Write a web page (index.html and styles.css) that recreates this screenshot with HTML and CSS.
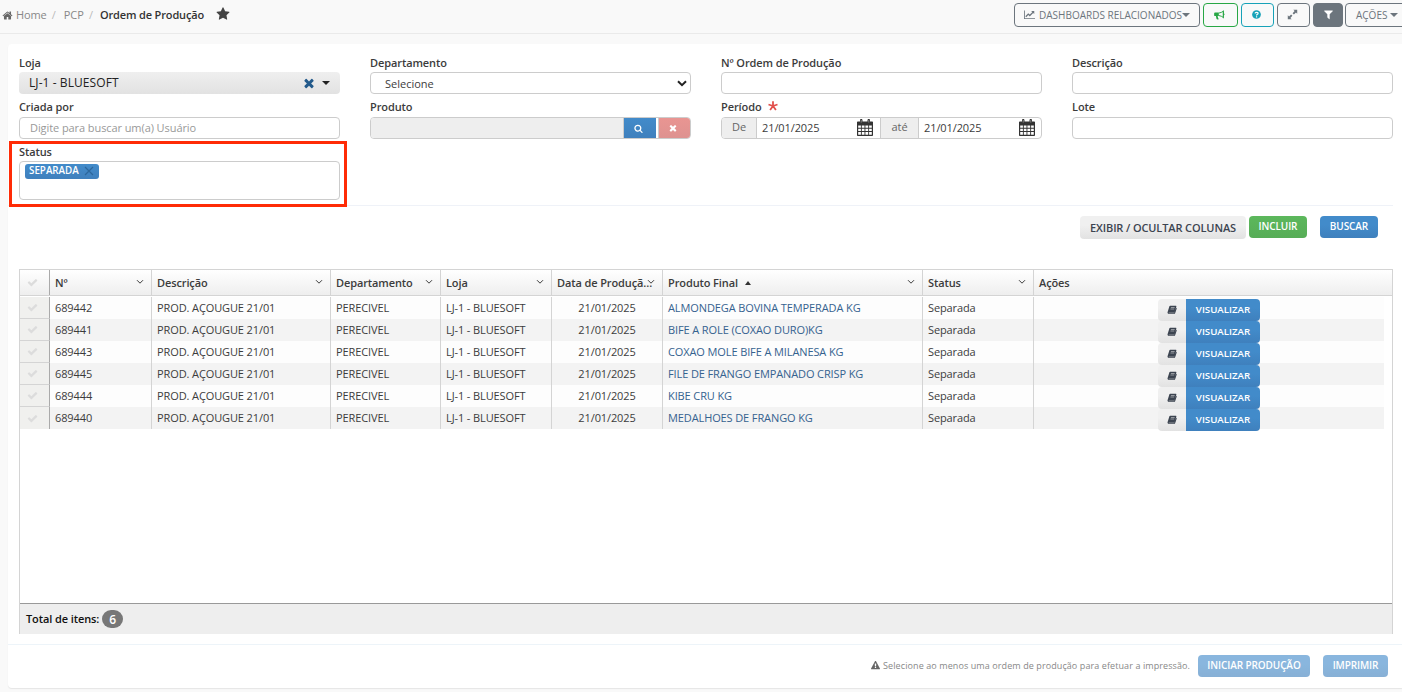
FILE: index.html
```html
<!DOCTYPE html>
<html lang="pt-BR">
<head>
    <meta charset="UTF-8">
    <meta name="viewport" content="width=device-width, initial-scale=1.0">
    <title>Ordem de Produção</title>
    <link rel="stylesheet" href="styles.css">
</head>
<body>

    <svg class="sprite">
        <symbol id="i-home" viewBox="0 0 1792 1792"><path d="M1472 992v480q0 26-19 45t-45 19h-384v-384h-256v384h-384q-26 0-45-19t-19-45v-480q0-1 .5-3t.5-3l575-474 575 474q1 2 1 6zm223-69l-62 74q-8 9-21 11h-3q-13 0-21-7l-692-577-692 577q-12 8-24 7-13-2-21-11l-62-74q-8-10-7-23.5t11-21.5l719-599q32-26 76-26t76 26l244 204v-195q0-14 9-23t23-9h192q14 0 23 9t9 23v408l219 182q10 8 11 21.5t-7 23.5z"/></symbol>
        <symbol id="i-star" viewBox="0 0 1792 1792"><path d="M1728 647q0 22-26 48l-363 354 86 500q1 7 1 20 0 21-10.5 35.5t-30.5 14.5q-19 0-40-12l-449-236-449 236q-22 12-40 12-21 0-31.5-14.5t-10.5-35.5q0-6 2-20l86-500-364-354q-25-27-25-48 0-37 56-46l502-73 225-455q19-41 49-41t49 41l225 455 502 73q56 9 56 46z"/></symbol>
        <symbol id="i-check" viewBox="0 0 1792 1792"><path d="M1671 566q0 40-28 68l-724 724-136 136q-28 28-68 28t-68-28l-136-136-362-362q-28-28-28-68t28-68l136-136q28-28 68-28t68 28l294 295 656-657q28-28 68-28t68 28l136 136q28 28 28 68z"/></symbol>
        <symbol id="i-times" viewBox="0 0 1792 1792"><path d="M1490 1322q0 40-28 68l-136 136q-28 28-68 28t-68-28l-294-294-294 294q-28 28-68 28t-68-28l-136-136q-28-28-28-68t28-68l294-294-294-294q-28-28-28-68t28-68l136-136q28-28 68-28t68 28l294 294 294-294q28-28 68-28t68 28l136 136q28 28 28 68t-28 68l-294 294 294 294q28 28 28 68z"/></symbol>
        <symbol id="i-search" viewBox="0 0 1792 1792"><path d="M1216 832q0-185-131.5-316.5t-316.5-131.5-316.5 131.5-131.5 316.5 131.5 316.5 316.5 131.5 316.5-131.5 131.5-316.5zm512 832q0 52-38 90t-90 38q-54 0-90-38l-343-342q-179 124-399 124-143 0-273.5-55.5t-225-150-150-225-55.5-273.5 55.5-273.5 150-225 225-150 273.5-55.5 273.5 55.5 225 150 150 225 55.5 273.5q0 220-124 399l343 343q37 37 37 90z"/></symbol>
        <symbol id="i-filter" viewBox="0 0 1792 1792"><path d="M1595 295q17 41-14 70l-493 493v742q0 42-39 59-13 5-25 5-27 0-45-19l-256-256q-19-19-19-45v-486l-493-493q-31-29-14-70 17-39 59-39h1280q42 0 59 39z"/></symbol>
        <symbol id="i-warning" viewBox="0 0 1792 1792"><path d="M1024 1375v-190q0-14-9.5-23.5t-22.5-9.5h-192q-13 0-22.5 9.5t-9.5 23.5v190q0 14 9.5 23.5t22.5 9.5h192q13 0 22.5-9.5t9.5-23.5zm-2-374l18-459q0-12-10-19-13-11-24-11h-220q-11 0-24 11-10 7-10 21l17 457q0 10 10 16.5t24 6.5h185q14 0 23.5-6.5t10.5-16.5zm-14-934l768 1408q35 63-2 126-17 29-46.5 46t-63.5 17h-1536q-34 0-63.5-17t-46.5-46q-37-63-2-126l768-1408q17-31 47-49t65-18 65 18 47 49z"/></symbol>
        <symbol id="i-chart" viewBox="0 0 16 14"><path d="M0 1h1.2v11.3H16v1.2H0z"/><path d="M2.6 10.2l3.6-3.8 2.2 2.1 5-5" fill="none" stroke="currentColor" stroke-width="1.9"/><path d="M10.4 1.800h4.500v4.500z"/></symbol>
        <symbol id="i-bullhorn" viewBox="0 0 16 14"><path d="M1.500 3.500H7v5H5.200l.9 3.300.9.9c-1.100 1.200-2.900 1-3.300.1L2.700 8.500H1.500C.7 8.500.2 8 .2 7.200V4.800C.2 4 .7 3.500 1.500 3.500z"/><path d="M7 4.200c2.500-.3 5-1.400 6.500-2.700v9C12 9.200 9.500 8.100 7 7.800" fill="none" stroke="currentColor" stroke-width="1.400"/><path d="M13 .5h1.300v4.200c1.400.3 1.400 2.500 0 2.800v4.200H13z"/></symbol>
        <symbol id="i-question" viewBox="0 0 14 14"><circle cx="7" cy="7" r="6.800"/><path d="M4.700 5.300C5 3.300 9.400 3 9.400 5.300c0 1.500-2.200 1.500-2.300 3.200M7.100 9.600v1.900" fill="none" stroke="#fff" stroke-width="1.900"/></symbol>
        <symbol id="i-expand" viewBox="0 0 14 14"><path d="M8 1h5v5l-1.600-1.600-2.600 2.700-1.700-1.700 2.600-2.700zM6 13H1V8l1.600 1.600 2.600-2.700 1.700 1.700-2.600 2.700z"/></symbol>
        <symbol id="i-book" viewBox="0 0 16 14"><path d="M5.600 1h8.200c1 0 1.400.7 1.100 1.600l-2.600 8.600c-.2.700-.8 1-1.400 1H3.300c-.7 0-.8.9.1.9h8.100L14.800 4c1 .3.900 1 .8 1.400L13 13c-.3.700-.8 1-1.500 1H3.200C1.300 14 .4 12.300 1 11L3.500 2.800C3.900 1.500 4.600 1 5.600 1zm.8 2.200L6.100 4.300h6l.3-1.100zM5.700 5.600l-.3 1.100h6l.3-1.100z" fill-rule="evenodd"/></symbol>
        <symbol id="i-calendar" viewBox="0 0 16 17"><path d="M1 2.500h2V1.300C3 .5 3.500 0 4.200 0s1.300.5 1.300 1.300v1.200h5V1.300c0-.8.500-1.300 1.300-1.300S13 .5 13 1.300v1.200h2c.6 0 1 .4 1 1V16c0 .6-.4 1-1 1H1c-.6 0-1-.4-1-1V3.500c0-.6.400-1 1-1z"/><path d="M1.200 6.500h2.700v2.300H1.200zm3.600 0h2.700v2.300H4.800zm3.600 0h2.800v2.300H8.400zm3.700 0h2.700v2.300h-2.700zM1.200 9.700h2.700V12H1.200zm3.600 0h2.700V12H4.800zm3.600 0h2.800V12H8.400zm3.700 0h2.700V12h-2.700zM1.200 12.900h2.700v2.800H1.200zm3.600 0h2.700v2.800H4.800zm3.600 0h2.800v2.800H8.400zm3.700 0h2.700v2.800h-2.700z" fill="#fff"/><path d="M4.200 1v2.600M11.800 1v2.600" stroke="#aaa" stroke-width=".7"/></symbol>
        <symbol id="i-down" viewBox="0 0 8 6"><path d="M1 1.200l3 3 3-3" fill="none" stroke="currentColor" stroke-width="1"/></symbol>
        <symbol id="i-select" viewBox="0 0 10 7"><path d="M1 1.200l4 4 4-4" fill="none" stroke="currentColor" stroke-width="2"/></symbol>
        <symbol id="i-x" viewBox="0 0 10 10"><path d="M1 1l8 8M9 1L1 9" fill="none" stroke="currentColor" stroke-width="1.200"/></symbol>
        <symbol id="i-required" viewBox="0 0 10 10"><path d="M5 5V.3M5 5l4.500-1.500M5 5l2.900 4M5 5L2.100 9M5 5L.5 3.500" fill="none" stroke="currentColor" stroke-width="1.800"/></symbol>
    </svg>

    <header class="topbar">
        <nav class="breadcrumb">
            <svg class="icon icon-home"><use href="#i-home"/></svg>
            <a class="crumb-home">Home</a><span class="sep">/</span>
            <a class="crumb-pcp">PCP</a><span class="sep sep-last">/</span>
            <b>Ordem de Produção</b>
            <svg class="icon icon-star"><use href="#i-star"/></svg>
        </nav>
        <div class="toolbar">
            <button class="tool tool-dash"><svg class="icon icon-chart"><use href="#i-chart"/></svg><span>DASHBOARDS RELACIONADOS</span><i class="caret"></i></button>
            <button class="tool tool-news"><svg class="icon icon-horn"><use href="#i-bullhorn"/></svg></button>
            <button class="tool tool-help"><svg class="icon icon-help"><use href="#i-question"/></svg></button>
            <button class="tool tool-expand"><svg class="icon icon-expand"><use href="#i-expand"/></svg></button>
            <button class="tool tool-filter"><svg class="icon icon-filter"><use href="#i-filter"/></svg></button>
            <button class="tool tool-actions"><span>AÇÕES</span><i class="caret"></i></button>
        </div>
    </header>

    <main class="panel">
        <section class="filters">
            <div class="field">
                <label>Loja</label>
                <div class="combo"><span class="combo-text">LJ-1 - BLUESOFT</span><span class="combo-clear"><svg class="icon"><use href="#i-times"/></svg></span><i class="caret"></i></div>
            </div>
            <div class="field">
                <label>Departamento</label>
                <div class="control select"><span>Selecione</span><svg class="icon"><use href="#i-select"/></svg></div>
            </div>
            <div class="field">
                <label>Nº Ordem de Produção</label>
                <div class="control"></div>
            </div>
            <div class="field">
                <label>Descrição</label>
                <div class="control"></div>
            </div>
            <div class="field second">
                <label>Criada por</label>
                <div class="control placeholder"><span>Digite para buscar um(a) Usuário</span></div>
            </div>
            <div class="field second">
                <label>Produto</label>
                <div class="control lookup">
                    <span class="lookup-value"></span>
                    <button class="lookup-search"><svg class="icon"><use href="#i-search"/></svg></button>
                    <button class="lookup-clear"><svg class="icon"><use href="#i-times"/></svg></button>
                </div>
            </div>
            <div class="field second">
                <label>Período <svg class="icon required"><use href="#i-required"/></svg></label>
                <div class="control period">
                    <span class="addon addon-from">De</span>
                    <span class="date date-from">21/01/2025<svg class="icon"><use href="#i-calendar"/></svg></span>
                    <span class="addon addon-to">até</span>
                    <span class="date">21/01/2025<svg class="icon"><use href="#i-calendar"/></svg></span>
                </div>
            </div>
            <div class="field second">
                <label>Lote</label>
                <div class="control"></div>
            </div>
            <div class="field field-status">
                <label>Status</label>
                <div class="control tags"><span class="tag">SEPARADA<svg class="icon"><use href="#i-x"/></svg></span></div>
                <div class="highlight"></div>
            </div>
        </section>

        <div class="actions">
            <button class="btn btn-default btn-columns"><span>EXIBIR / OCULTAR COLUNAS</span></button>
            <button class="btn btn-success"><span>INCLUIR</span></button>
            <button class="btn btn-primary btn-search"><span>BUSCAR</span></button>
        </div>

        <section class="grid">
            <div class="row head">
                <div class="cell check"><svg class="icon"><use href="#i-check"/></svg></div>
                <div class="cell"><span>Nº</span><svg class="icon menu"><use href="#i-down"/></svg></div>
                <div class="cell"><span>Descrição</span><svg class="icon menu"><use href="#i-down"/></svg></div>
                <div class="cell"><span>Departamento</span><svg class="icon menu"><use href="#i-down"/></svg></div>
                <div class="cell"><span>Loja</span><svg class="icon menu"><use href="#i-down"/></svg></div>
                <div class="cell cut"><span>Data de Produçã...</span><svg class="icon menu"><use href="#i-down"/></svg></div>
                <div class="cell"><span>Produto Final</span><i class="sort-up"></i><svg class="icon menu"><use href="#i-down"/></svg></div>
                <div class="cell"><span>Status</span><svg class="icon menu"><use href="#i-down"/></svg></div>
                <div class="cell"><span>Ações</span></div>
            </div>
            <div class="rows">
                <div class="row">
                    <div class="cell check"><svg class="icon"><use href="#i-check"/></svg></div>
                    <div class="cell num">689442</div><div class="cell desc">PROD. AÇOUGUE 21/01</div><div class="cell dept">PERECIVEL</div><div class="cell store">LJ-1 - BLUESOFT</div><div class="cell day">21/01/2025</div>
                    <div class="cell"><a>ALMONDEGA BOVINA TEMPERADA KG</a></div><div class="cell">Separada</div>
                    <div class="cell tools"><button class="btn-book"><svg class="icon"><use href="#i-book"/></svg></button><button class="btn-view"><span>VISUALIZAR</span></button></div>
                </div>
                <div class="row">
                    <div class="cell check"><svg class="icon"><use href="#i-check"/></svg></div>
                    <div class="cell num">689441</div><div class="cell desc">PROD. AÇOUGUE 21/01</div><div class="cell dept">PERECIVEL</div><div class="cell store">LJ-1 - BLUESOFT</div><div class="cell day">21/01/2025</div>
                    <div class="cell"><a>BIFE A ROLE (COXAO DURO)KG</a></div><div class="cell">Separada</div>
                    <div class="cell tools"><button class="btn-book"><svg class="icon"><use href="#i-book"/></svg></button><button class="btn-view"><span>VISUALIZAR</span></button></div>
                </div>
                <div class="row">
                    <div class="cell check"><svg class="icon"><use href="#i-check"/></svg></div>
                    <div class="cell num">689443</div><div class="cell desc">PROD. AÇOUGUE 21/01</div><div class="cell dept">PERECIVEL</div><div class="cell store">LJ-1 - BLUESOFT</div><div class="cell day">21/01/2025</div>
                    <div class="cell"><a>COXAO MOLE BIFE A MILANESA KG</a></div><div class="cell">Separada</div>
                    <div class="cell tools"><button class="btn-book"><svg class="icon"><use href="#i-book"/></svg></button><button class="btn-view"><span>VISUALIZAR</span></button></div>
                </div>
                <div class="row">
                    <div class="cell check"><svg class="icon"><use href="#i-check"/></svg></div>
                    <div class="cell num">689445</div><div class="cell desc">PROD. AÇOUGUE 21/01</div><div class="cell dept">PERECIVEL</div><div class="cell store">LJ-1 - BLUESOFT</div><div class="cell day">21/01/2025</div>
                    <div class="cell"><a>FILE DE FRANGO EMPANADO CRISP KG</a></div><div class="cell">Separada</div>
                    <div class="cell tools"><button class="btn-book"><svg class="icon"><use href="#i-book"/></svg></button><button class="btn-view"><span>VISUALIZAR</span></button></div>
                </div>
                <div class="row">
                    <div class="cell check"><svg class="icon"><use href="#i-check"/></svg></div>
                    <div class="cell num">689444</div><div class="cell desc">PROD. AÇOUGUE 21/01</div><div class="cell dept">PERECIVEL</div><div class="cell store">LJ-1 - BLUESOFT</div><div class="cell day">21/01/2025</div>
                    <div class="cell"><a>KIBE CRU KG</a></div><div class="cell">Separada</div>
                    <div class="cell tools"><button class="btn-book"><svg class="icon"><use href="#i-book"/></svg></button><button class="btn-view"><span>VISUALIZAR</span></button></div>
                </div>
                <div class="row">
                    <div class="cell check"><svg class="icon"><use href="#i-check"/></svg></div>
                    <div class="cell num">689440</div><div class="cell desc">PROD. AÇOUGUE 21/01</div><div class="cell dept">PERECIVEL</div><div class="cell store">LJ-1 - BLUESOFT</div><div class="cell day">21/01/2025</div>
                    <div class="cell"><a>MEDALHOES DE FRANGO KG</a></div><div class="cell">Separada</div>
                    <div class="cell tools"><button class="btn-book"><svg class="icon"><use href="#i-book"/></svg></button><button class="btn-view"><span>VISUALIZAR</span></button></div>
                </div>
            </div>
            <div class="grid-footer"><span>Total de itens:</span><span class="badge">6</span></div>
        </section>

        <footer class="panel-footer">
            <svg class="icon icon-warning"><use href="#i-warning"/></svg>
            <span class="hint">Selecione ao menos uma ordem de produção para efetuar a impressão.</span>
            <button class="btn btn-primary btn-start" disabled><span>INICIAR PRODUÇÃO</span></button>
            <button class="btn btn-primary btn-print" disabled><span>IMPRIMIR</span></button>
        </footer>
    </main>

</body>
</html>
```
FILE: styles.css
```css
* {
    box-sizing: border-box;
}
body {
    margin: 0;
    height: 692px;
    overflow: hidden;
    background-color: #f9f9f9;
    font-family: "Open Sans", sans-serif;
    font-size: 11px;
    color: #3c3c3c;
    white-space: nowrap;
}
button {
    display: flex;
    align-items: center;
    justify-content: center;
    padding: 0;
    border: 0;
    font-family: inherit;
    white-space: nowrap;
}
.sprite {
    display: none;
}
.icon {
    flex: none;
    width: 11px;
    height: 11px;
    fill: currentColor;
}
.caret {
    flex: none;
    border: 4px solid transparent;
    border-top-color: currentColor;
    border-bottom: 0;
}

/* topo */
.topbar {
    display: flex;
    justify-content: space-between;
    height: 34px;
    border-bottom: 1px solid #eaeaea;
}
.breadcrumb {
    display: flex;
    align-items: center;
    height: 28px;
    padding-left: 2px;
    color: #888;
}
.breadcrumb b {
    color: #333;
    font-weight: 600;
    font-size: 11px;
    letter-spacing: -.15px;
}
.icon-home {
    color: #666;
    margin: 2px 3px 0 0;
}
.crumb-home {
    letter-spacing: -.1px;
}
.sep {
    margin: 0 8px 0 5px;
    color: #bbb;
}
.sep-last {
    margin: 0 7px 0 5px;
}
.icon-star {
    width: 14px;
    height: 14px;
    margin-left: 12px;
    color: #444;
}
.toolbar {
    display: flex;
    gap: 3px;
    width: 388px;
    padding-top: 3px;
}
.tool {
    flex: none;
    height: 24px;
    padding-bottom: 1px;
    background: transparent;
    border: 1px solid #6c757d;
    border-radius: 4px;
    color: #6c757d;
    font-size: 10px;
}
.tool .caret {
    margin-top: 1px;
    border-width: 4px 4px 0;
}
.tool-dash {
    width: 186px;
}
.icon-chart {
    margin-right: 4px;
}
.tool-news {
    width: 35px;
    padding-right: 3px;
    border-color: #28a745;
    color: #28a745;
}
.icon-horn {
    width: 11px;
    height: 10px;
}
.tool-help {
    width: 33px;
    border-color: #17a2b8;
    color: #17a2b8;
}
.icon-help {
    width: 9px;
    height: 9px;
    margin-right: 3px;
}
.tool-expand {
    width: 33px;
}
.icon-expand {
    width: 11px;
    height: 11px;
    margin-right: 3px;
}
.tool-filter {
    width: 30px;
    background-color: #6c757d;
    color: #fff;
}
.tool-actions {
    width: 64px;
    margin-left: -1px;
    justify-content: flex-start;
    padding-left: 10px;
}
.tool-actions .caret {
    margin-left: 3px;
}

/* painel */
.panel {
    margin: 10px 0 0 8px;
    height: 644px;
    background-color: #fff;
    border-radius: 4px 0 0 4px;
    box-shadow: 0 1px 1px #e5e5e5;
}
.filters {
    display: grid;
    grid-template-columns: repeat(4, 321px);
    grid-template-rows: 45px 44px 51px;
    column-gap: 30px;
    height: 162px;
    margin-right: 9px;
    padding: 11px 0 0 11px;
    border-bottom: 1px solid #eff2f8;
}
.field label {
    display: flex;
    align-items: center;
    height: 17px;
    padding-bottom: 2px;
    font-weight: 600;
    letter-spacing: -.1px;
}
.second label {
    padding-bottom: 4px;
}
.control {
    display: flex;
    align-items: center;
    height: 22px;
    background-color: #fff;
    border: 1px solid #ccc;
    border-radius: 4px;
}
.combo {
    display: flex;
    align-items: center;
    height: 22px;
    padding: 0 10px 1px;
    border-radius: 4px;
    background: linear-gradient(#efefef, #e2e2e2);
    font-size: 12px;
    color: #222;
}
.combo-text {
    letter-spacing: .08px;
}
.combo-clear {
    display: flex;
    align-items: center;
    justify-content: center;
    width: 27px;
    height: 21px;
    margin-left: auto;
    color: #235a8b;
}
.combo-clear .icon {
    width: 14px;
    height: 14px;
}
.combo .caret {
    color: #222;
}
.select {
    justify-content: space-between;
    padding: 0 3px 0 14px;
}
.select .icon {
    width: 10px;
    height: 7px;
    color: #222;
}
.placeholder {
    padding: 0 0 2px 10px;
    color: #999;
    letter-spacing: -.08px;
}
.lookup {
    overflow: hidden;
}
.lookup-value {
    flex: 1;
    height: 20px;
    background-color: #eee;
    border-right: 1px solid #ccc;
}
.lookup-search,
.lookup-clear {
    height: 20px;
    color: #fff;
}
.lookup-search {
    width: 32px;
    background: linear-gradient(#428bca, #3f80bd);
}
.lookup-search .icon {
    width: 9px;
    height: 9px;
    margin-right: 4px;
}
.lookup-clear {
    width: 32px;
    margin-left: 2px;
    background: linear-gradient(#e99592, #de9290);
    border-left: 1px solid #ccc;
}
.lookup-clear .icon {
    width: 10px;
    height: 10px;
    margin-right: 4px;
}
.required {
    width: 10px;
    height: 10px;
    margin: -2px 0 0 6px;
    color: #e2504c;
}
.period {
    overflow: hidden;
}
.addon {
    display: flex;
    align-items: center;
    justify-content: center;
    height: 20px;
    padding-bottom: 3px;
    background-color: #eee;
    border-right: 1px solid #ccc;
    color: #666;
}
.addon-from {
    width: 35px;
}
.addon-to {
    width: 39px;
    border-left: 1px solid #ccc;
}
.date {
    flex: 1;
    display: flex;
    align-items: center;
    justify-content: space-between;
    padding: 0 6px 2px 5px;
    letter-spacing: -.1px;
}
.date-from {
    flex: none;
    width: 123px;
    padding-right: 7px;
}
.date .icon {
    width: 16px;
    height: 17px;
    color: #333;
}
.field-status {
    position: relative;
}
.tags {
    align-items: flex-start;
    height: 39px;
    padding: 2px 5px;
}
.tag {
    display: flex;
    align-items: center;
    height: 15px;
    width: 74px;
    padding: 0 5px 2px 4px;
    justify-content: space-between;
    background: linear-gradient(#428bca, #3f80bd);
    border-radius: 3px;
    color: #fff;
    font-size: 9.8px;
    font-weight: 600;
}
.tag .icon {
    width: 10px;
    height: 10px;
    margin-top: 1px;
    color: #2c679c;
}
.highlight {
    position: absolute;
    left: -10px;
    top: -3px;
    width: 338px;
    height: 66px;
    border: 3px solid #ff2b06;
}

/* botões */
.actions {
    display: flex;
    height: 63px;
    padding: 10px 0 0 1072px;
}
.btn {
    flex: none;
    height: 22px;
    padding-bottom: 2px;
    border-radius: 4px;
    font-size: 10px;
    font-weight: 600;
    letter-spacing: -.1px;
    color: #fff;
}
.btn-default {
    width: 166px;
    height: 23px;
    margin-right: 3px;
    padding-bottom: 0;
    background: linear-gradient(#f0f0f0 40%, #e2e2e2);
    font-size: 11px;
    letter-spacing: -.12px;
    color: #3c4450;
}
.btn-success {
    width: 58px;
    background: linear-gradient(#5cb85c, #57ad57);
}
.btn-primary {
    background: linear-gradient(#428bca 40%, #3f80bd);
}
.btn-search {
    width: 58px;
    margin-left: 13px;
}
.btn:disabled {
    opacity: .62;
}

/* tabela */
.grid {
    width: 1374px;
    height: 365px;
    margin-left: 11px;
    border: 1px solid #d4d4d4;
    border-bottom: 0;
    display: flex;
    flex-direction: column;
}
.row {
    display: grid;
    grid-template-columns: 30px 102px 179px 110px 111px 111px 260px 111px 1fr;
    grid-template-rows: 100%;
    height: 22px;
    width: 1364px;
    background-color: #fdfdfd;
}
.row:nth-child(even) {
    background-color: #f3f3f3;
}
.cell {
    display: flex;
    align-items: center;
    min-width: 0;
    padding: 0 0 2px 5px;
    border-right: 1px solid #d4d4d4;
    letter-spacing: -.11px;
}
.cell:last-child {
    border-right: 0;
}
.rows {
    flex: 1;
    padding-top: 1px;
}
.rows .cell a {
    color: #35628f;
}
.head {
    width: 1372px;
    height: 26px;
    background: linear-gradient(#fff, #eee);
    border-bottom: 1px solid #d4d4d4;
    font-weight: 600;
}
.head .cell {
    padding-bottom: 0;
}
.check {
    justify-content: center;
    padding: 0 4px 0 0;
    border-right-color: #aaa;
    color: #dcdcdc;
}
.rows .check {
    background-color: #f0f0ee;
    border-bottom: 1px solid #d4d4d4;
}
.rows .row:last-child .check {
    border-bottom: 0;
}
.menu {
    width: 8px;
    height: 6px;
    margin: 0 7px 2px auto;
}
.cut .menu {
    margin-left: -5px;
}
.sort-up {
    margin-left: 7px;
    border: 3px solid transparent;
    border-bottom: 4px solid #333;
    border-top: 0;
}
.day {
    justify-content: center;
    padding-left: 0;
}
.tools {
    position: relative;
    z-index: 1;
    padding: 2px 0 0 124px;
    align-items: flex-start;
}
.btn-book,
.btn-view {
    flex: none;
    height: 22px;
    padding-bottom: 2px;
}
.btn-book {
    width: 28px;
    background: linear-gradient(#f0f0f0 40%, #e2e2e2);
    border-radius: 4px 0 0 4px;
    color: #3c4450;
}
.btn-book .icon {
    width: 10px;
    height: 9px;
}
.btn-view {
    width: 74px;
    background: linear-gradient(#428bca 40%, #3f80bd);
    border-radius: 0 4px 4px 0;
    color: #fff;
    font-size: 9.7px;
    font-weight: 600;
    letter-spacing: 0;
}
.grid-footer {
    display: flex;
    align-items: center;
    height: 31px;
    padding: 0 0 2px 6px;
    background-color: #eee;
    border-top: 1px solid #999;
    font-weight: 600;
    letter-spacing: -.1px;
    color: #111;
}
.badge {
    display: flex;
    align-items: center;
    justify-content: center;
    width: 21px;
    height: 18px;
    margin: 2px 0 0 3px;
    background-color: #777;
    border-radius: 9px;
    color: #fff;
    font-size: 12px;
}

/* rodapé */
.panel-footer {
    display: flex;
    align-items: center;
    justify-content: flex-end;
    height: 44px;
    margin-top: 10px;
    padding: 0 14px 1px 0;
    border-top: 1px solid #edf4f9;
}
.icon-warning {
    width: 9px;
    height: 9px;
    margin: 0 3px 1px 0;
    color: #666;
}
.hint {
    padding-bottom: 1px;
    font-size: 9px;
    letter-spacing: .09px;
    color: #888;
}
.btn-start {
    width: 112px;
    margin: 0 13px 0 8px;
}
.btn-print {
    width: 65px;
}
```
